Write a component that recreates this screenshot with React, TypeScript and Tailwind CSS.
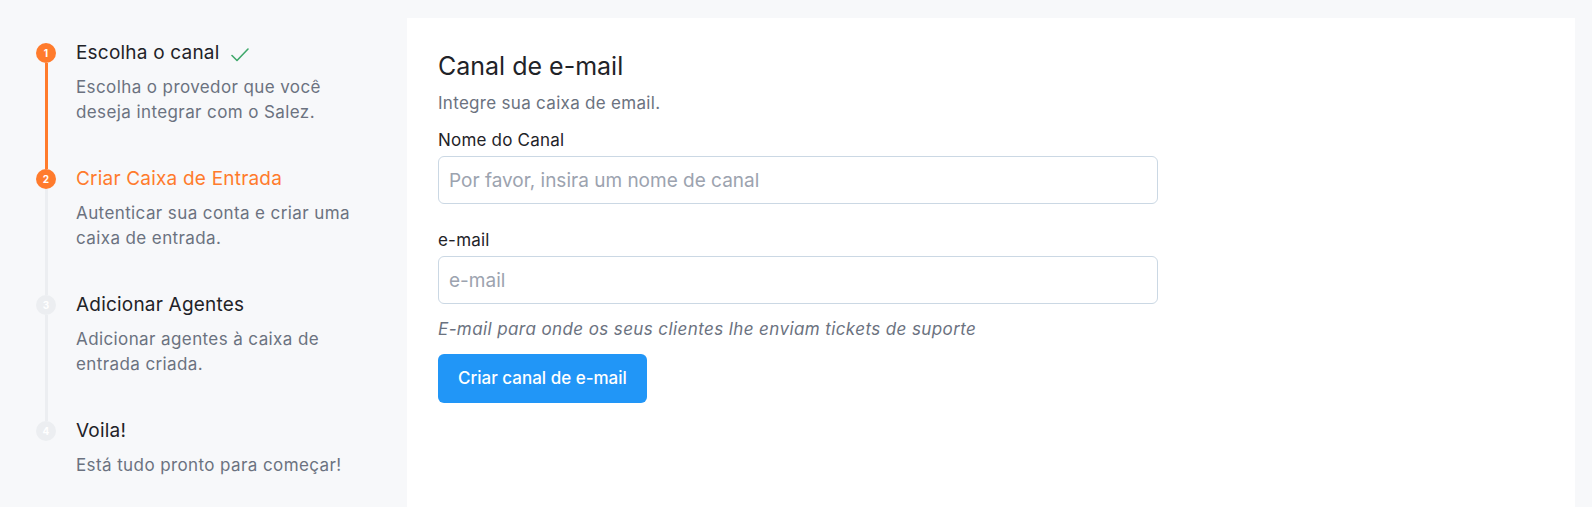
import React from "react";

type Step = {
  n: number;
  title: string;
  desc: string[];
  state: "done" | "active" | "todo";
};

const steps: Step[] = [
  {
    n: 1,
    title: "Escolha o canal",
    desc: ["Escolha o provedor que você", "deseja integrar com o Salez."],
    state: "done",
  },
  {
    n: 2,
    title: "Criar Caixa de Entrada",
    desc: ["Autenticar sua conta e criar uma", "caixa de entrada."],
    state: "active",
  },
  {
    n: 3,
    title: "Adicionar Agentes",
    desc: ["Adicionar agentes à caixa de", "entrada criada."],
    state: "todo",
  },
  {
    n: 4,
    title: "Voila!",
    desc: ["Está tudo pronto para começar!"],
    state: "todo",
  },
];

const StepItem: React.FC<{ step: Step; last: boolean }> = ({ step, last }) => {
  const circle = step.state === "todo" ? "bg-[#eceef1]" : "bg-[#ff7b2c]";
  const line = step.state === "done" ? "bg-[#ff7b2c]" : "bg-[#eceef1]";
  return (
    <div className={`flex ${last ? "" : "h-[126px]"}`}>
      {/* Circle and connector */}
      <div className="flex w-5 flex-col items-center">
        <div
          className={`flex h-5 w-5 shrink-0 items-center justify-center rounded-full text-[10px] font-bold text-white ${circle}`}
        >
          {step.n}
        </div>
        {!last && <div className={`w-[3px] flex-1 ${line}`} />}
      </div>

      {/* Text */}
      <div className="ml-[20px]">
        <div
          className={`flex items-center gap-[11px] text-[19px] leading-5 tracking-[0.2px] ${
            step.state === "active" ? "text-[#ff7b2c]" : "text-[#1f2328]"
          }`}
        >
          {step.title}
          {step.state === "done" && (
            <svg
              viewBox="0 0 18 14"
              className="mt-1 h-[14px] w-[18px]"
              fill="none"
              stroke="#3fa86b"
              strokeWidth="1.6"
              strokeLinecap="round"
              strokeLinejoin="round"
            >
              <path d="M1 7.5l5 5L17 1" />
            </svg>
          )}
        </div>
        <div className="mt-3 text-[17px] leading-[25px] tracking-[0.4px] text-[#6b7280]">
          {step.desc.map((d) => (
            <div key={d}>{d}</div>
          ))}
        </div>
      </div>
    </div>
  );
};

const App: React.FC = () => {
  return (
    <div
      className="flex h-[507px] w-full bg-[#f7f8fa]"
      style={{ fontFamily: "Inter, 'Noto Sans', sans-serif" }}
    >
      {/* Steps sidebar */}
      <div className="w-[407px] shrink-0 pl-9 pt-[43px]">
        {steps.map((s, i) => (
          <StepItem key={s.n} step={s} last={i === steps.length - 1} />
        ))}
      </div>

      {/* Form panel */}
      <div className="mr-[17px] mt-[18px] flex-1 bg-white pl-[31px] pt-[32px]">
        <h2 className="text-[25px] leading-8 text-[#1f2328]">
          Canal de e-mail
        </h2>
        <p className="mt-[9px] text-[17px] leading-6 tracking-[0.3px] text-[#6b7280]">
          Integre sua caixa de email.
        </p>

        <div className="w-[720px]">
          <label className="mt-[13px] block text-[17px] leading-6 tracking-[0.2px] text-[#1f2328]">
            Nome do Canal
          </label>
          <input
            type="text"
            placeholder="Por favor, insira um nome de canal"
            className="mt-1 h-12 w-full rounded-md border border-[#cbd8e4] px-[10px] text-[19px] text-[#1f2328] outline-none placeholder:text-[#9ca3af]"
          />

          <label className="mt-6 block text-[17px] leading-6 tracking-[0.2px] text-[#1f2328]">
            e-mail
          </label>
          <input
            type="text"
            placeholder="e-mail"
            className="mt-1 h-12 w-full rounded-md border border-[#cbd8e4] px-[10px] text-[19px] text-[#1f2328] outline-none placeholder:text-[#9ca3af]"
          />
          <p className="mt-[13px] text-[17px] italic leading-6 tracking-[0.4px] text-[#6b7280]">
            E-mail para onde os seus clientes lhe enviam tickets de suporte
          </p>
        </div>

        <button
          type="button"
          className="mt-[13px] h-[49px] rounded-md bg-[#2196f7] px-5 text-[17px] font-medium text-white"
        >
          Criar canal de e-mail
        </button>
      </div>
    </div>
  );
};

export default App;
